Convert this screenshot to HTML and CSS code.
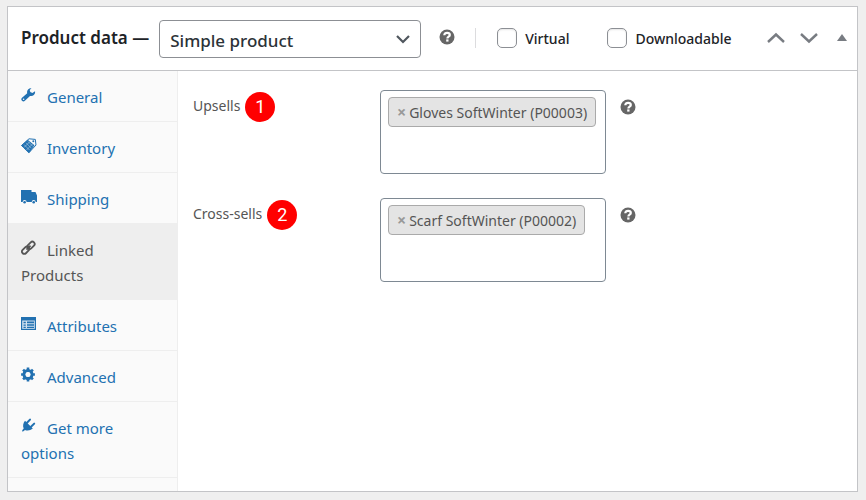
FILE: index.html
```html
<!DOCTYPE html>
<html lang="en">
<head>
<meta charset="utf-8">
<title>Product data</title>
<link rel="stylesheet" href="styles.css">
</head>
<body>
<svg class="sprite" aria-hidden="true">
  <symbol id="help" viewBox="0 0 16 16">
    <circle cx="8" cy="8" r="7.500" fill="#666"/>
    <path d="M5.300 6.300C5.300 4.500 6.500 3.900 8.100 3.900c1.600 0 2.700.8 2.700 2.100 0 1.800-2.400 1.600-2.400 3.400" fill="none" stroke="#fff" stroke-width="2.200"/>
    <rect x="7.200" y="10.400" width="2.300" height="2.200" fill="#fff"/>
  </symbol>
</svg>
<main class="panel">
  <header class="head">
    <h2 class="title"><label for="type">Product data —</label></h2>
    <div class="select">
      <select id="type"><option>Simple product</option></select>
      <svg class="caret" viewBox="0 0 16 16"><path d="M2 5l6 6 6-6" fill="none" stroke="#50575e" stroke-width="2.200"/></svg>
    </div>
    <svg class="help"><use href="#help"/></svg>
    <div class="checks">
      <label class="check"><input type="checkbox"><span>Virtual</span></label>
      <label class="check"><input type="checkbox"><span>Downloadable</span></label>
    </div>
    <div class="actions">
      <button type="button" aria-label="Move up"><svg viewBox="0 0 18 18"><path d="M1 13l8-7.500 8 7.500" fill="none" stroke="#787c82" stroke-width="2.400"/></svg></button>
      <button type="button" aria-label="Move down"><svg viewBox="0 0 18 18"><path d="M1 5l8 7.500L17 5" fill="none" stroke="#787c82" stroke-width="2.400"/></svg></button>
      <button type="button" class="toggle" aria-label="Toggle panel"><svg viewBox="0 0 10 18"><path d="M5 5l5 7H0z" fill="#787c82"/></svg></button>
    </div>
  </header>
  <div class="body">
    <nav class="tabs">
      <a href="#"><svg class="icon" viewBox="0 0 16 16"><path d="M10.500 1.200a4 4 0 0 0-4.300 5L1 10.800a2 2 0 0 0 2.900 2.900L9 8.900a4 4 0 0 0 5-4.700l-2.600 1.700-2.100-.8-.6-2z" fill="currentColor"/><circle cx="2.600" cy="12.200" r=".8" fill="#fafafa"/></svg>General</a>
      <a href="#"><svg class="icon" viewBox="0 0 16 16"><path d="M.5 7.500L8 .8l6.300.6.700 5.600-7 7.600z" fill="#fafafa" stroke="currentColor" stroke-width="1"/><path d="M.3 7.500l6.400-5.700 6.800 5.500-5.500 7.900z" fill="currentColor"/><path d="M3 6.500l5.500 5.500M5 4.800l5.500 5.500M7 3.500l5 5M3 9.500l6-6M5.500 12l6-6" stroke="#fafafa" stroke-width=".5" opacity=".8"/><circle cx="12.300" cy="3.300" r="1" fill="currentColor"/></svg>Inventory</a>
      <a href="#"><svg class="icon" viewBox="0 0 16 16"><path d="M0 1h10.500v2h4L16 6.500V13h-1.300a2 2 0 0 0-4 0H5.600a2 2 0 0 0-4 0H0z" fill="currentColor"/><circle cx="3.600" cy="13.200" r="1.300" fill="currentColor"/><circle cx="12.700" cy="13.200" r="1.300" fill="currentColor"/></svg>Shipping</a>
      <a href="#" class="active" aria-current="page"><svg class="icon" viewBox="0 0 16 16"><g fill="none" stroke="currentColor" stroke-width="1.800"><rect x="5.700" y="3" width="8.500" height="4.600" rx="2.300" transform="rotate(-45 10 5.300)"/><rect x=".4" y="7.900" width="8.500" height="4.600" rx="2.300" transform="rotate(-45 4.700 10.200)"/><path d="M5.500 9.600l4-4"/></g></svg>Linked Products</a>
      <a href="#"><svg class="icon" viewBox="0 0 16 16"><path d="M0 1h15v13H0z" fill="currentColor"/><path d="M1.200 4.500h12.600v8.300H1.200z" fill="#d3e3f0"/><path d="M2.500 5.800h2.300v1.500H2.500zM2.500 8.500h2.300v1.200H2.500zM2.500 10.800h2.300V12H2.500zM6 5.500h7v1.800H6zM6 8.300h7v1.500H6zM6 10.700h7V12H6z" fill="currentColor"/></svg>Attributes</a>
      <a href="#"><svg class="icon" viewBox="0 0 16 16"><circle cx="7" cy="7.500" r="4" fill="none" stroke="currentColor" stroke-width="3"/><path d="M7 .6v3M7 11.400v3M.1 7.500h3M10.900 7.500h3M2.100 2.600l2 2M9.900 10.400l2 2M2.100 12.400l2-2M9.900 4.600l2-2" stroke="currentColor" stroke-width="2.600"/><circle cx="7" cy="7.500" r="2.300" fill="#fafafa"/></svg>Advanced</a>
      <a href="#"><svg class="icon" viewBox="0 0 16 16"><path d="M4 2.800l7.800 7.800c-2.300 2-5.800 2.300-7.800 1.300L2.500 13.300 1 13.600l.4-1.700 1.300-1.300C1.500 8.200 2.200 4.800 4 2.800z" fill="currentColor"/><path d="M6 4.800l3-3.200M10 8.800l3.200-3.200" stroke="currentColor" stroke-width="2" stroke-linecap="round"/></svg>Get more options</a>
    </nav>
    <section class="fields">
      <div class="field">
        <div class="name"><span>Upsells</span><span class="badge">1</span></div>
        <div class="box"><span class="tag"><button type="button" aria-label="Remove Gloves SoftWinter">×</button>Gloves SoftWinter (P00003)</span></div>
        <svg class="help"><use href="#help"/></svg>
      </div>
      <div class="field">
        <div class="name"><span>Cross-sells</span><span class="badge">2</span></div>
        <div class="box"><span class="tag"><button type="button" aria-label="Remove Scarf SoftWinter">×</button>Scarf SoftWinter (P00002)</span></div>
        <svg class="help"><use href="#help"/></svg>
      </div>
    </section>
  </div>
</main>
</body>
</html>
```
FILE: styles.css
```css
* { box-sizing: border-box; }
body {
  margin: 0;
  padding: 6px 8px 8px 7px;
  min-height: 100vh;
  display: flex;
  background: #efefef;
  color: #1d2327;
  font-family: "Segoe UI", "Noto Sans", sans-serif;
  font-size: 14px;
}
.sprite { position: absolute; width: 0; height: 0; }
.panel {
  flex: 1;
  display: flex;
  flex-direction: column;
  background: #fff;
  border: 1px solid #c3c4c7;
}
.head {
  display: flex;
  align-items: center;
  padding: 13px 10px 12px 13px;
  border-bottom: 1px solid #c3c4c7;
}
.title { margin: 0 10px 2px 0; font-size: 17px; font-weight: 600; line-height: 24px; white-space: nowrap; }
.select { display: grid; align-items: center; width: 262px; }
.select > * { grid-area: 1 / 1; }
.select select {
  appearance: none;
  width: 100%;
  height: 38px;
  padding: 2px 30px 0 10px;
  border: 1px solid #8c8f94;
  border-radius: 4px;
  background: #fff;
  color: #2c3338;
  font: 500 17px "Segoe UI", "Noto Sans", sans-serif;
}
.caret { width: 16px; height: 16px; justify-self: end; margin-right: 10px; pointer-events: none; }
.help { width: 16px; height: 16px; flex: none; }
.head .help { margin: 0 20px 4px 18px; }
.checks {
  display: flex;
  gap: 38px;
  align-items: center;
  height: 20px;
  margin-bottom: 2px;
  padding-left: 21px;
  border-left: 1px solid #dcdcde;
}
.check { display: flex; align-items: center; gap: 8px; font-weight: 500; white-space: nowrap; }
.check input {
  appearance: none;
  width: 20px;
  height: 20px;
  margin: 0;
  border: 1px solid #8c8f94;
  border-radius: 5px;
  background: #fff;
  box-shadow: inset 0 1px 2px rgba(0, 0, 0, .1);
}
.actions { display: flex; gap: 15px; margin-bottom: 2px; margin-left: auto; }
.actions button { padding: 0; border: 0; background: none; width: 18px; height: 18px; }
.actions .toggle { width: 10px; margin-left: 4px; }
.actions svg { display: block; width: 100%; height: 100%; }
.body { flex: 1; display: flex; }
.tabs { width: 170px; flex: none; background: #fafafa; border-right: 1px solid #eee; }
.tabs a {
  display: block;
  padding: 14px 20px 11px 13px;
  border-bottom: 1px solid #eee;
  color: #2271b1;
  font-size: 15px;
  line-height: 25px;
  text-decoration: none;
}
.tabs .active { background: #eee; color: #555; }
.icon { width: 16px; height: 16px; margin-right: 10px; vertical-align: 0; }
.fields {
  flex: 1;
  display: flex;
  flex-direction: column;
  gap: 24px;
  padding: 19px 15px;
  color: #555;
}
.field { display: flex; align-items: flex-start; }
.name { display: flex; gap: 5px; width: 187px; flex: none; line-height: 32px; }
.badge {
  width: 30px;
  height: 30px;
  margin-top: 2px;
  border-radius: 50%;
  background: #f00;
  color: #fff;
  font-family: Roboto, sans-serif;
  font-size: 18px;
  line-height: 30px;
  text-align: center;
}
.box {
  width: 226px;
  height: 84px;
  padding: 6px 7px;
  border: 1px solid #7e8993;
  border-radius: 4px;
}
.tag {
  display: inline-flex;
  align-items: center;
  height: 30px;
  padding: 0 8px;
  border: 1px solid #aaa;
  border-radius: 4px;
  background: #e4e4e4;
  white-space: nowrap;
}
.tag button { padding: 0; margin-right: 3px; border: 0; background: none; color: #999; font: 700 16px "Noto Sans", sans-serif; }
.field .help { margin: 9px 0 0 14px; }
```
